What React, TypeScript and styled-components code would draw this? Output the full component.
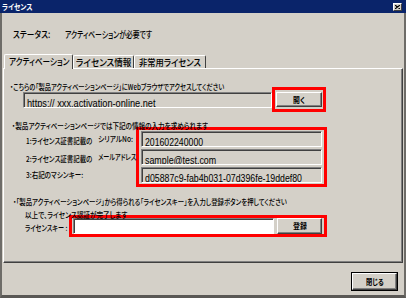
import React, { useLayoutEffect, useRef, useState } from 'react';
import styled, { createGlobalStyle } from 'styled-components';

const GlobalStyle = createGlobalStyle`
  html, body {
    margin: 0;
    padding: 0;
    background: #d4d0c8;
  }
  body {
    font-family: "Noto Sans CJK JP", sans-serif;
    font-feature-settings: "palt";
    font-weight: 500;
    color: #000;
  }
`

// the dialog uses a narrow UI font: each text keeps its height and is
// squeezed to the width it has in the screenshot
const FitSpan = styled.span<{ $size: number; $latin?: boolean }>`
  display: inline-block;
  white-space: nowrap;
  font-size: ${p => p.$size}px;
  ${p => (p.$latin ? 'font-family: "Liberation Sans", Arial, sans-serif; font-weight: 400;' : '')}
  transform-origin: 0 50%;
`

type FitProps = { w: number; size: number; latin?: boolean; children: React.ReactNode };

function Fit({ w, size, latin, children }: FitProps) {
  const ref = useRef<HTMLSpanElement>(null);
  const [k, setK] = useState(1);

  useLayoutEffect(() => {
    let alive = true;
    const measure = () => {
      const el = ref.current;
      if (!el || !alive) return;
      const natural = el.scrollWidth;
      if (natural > 0) setK(Math.min(1, w / natural));
    };
    measure();
    if (document.fonts) document.fonts.ready.then(measure);
    return () => {
      alive = false;
    };
  }, [w, size]);

  return (
    <FitSpan ref={ref} $size={size} $latin={latin} style={{ width: w, transform: `scaleX(${k})` }}>
      {children}
    </FitSpan>
  );
}

const Window = styled.div`
  width: 406px;
  height: 298px;
  display: flex;
  flex-direction: column;
  background: #d4d0c8;
  overflow: hidden;
`

const TitleBar = styled.div`
  height: 13px;
  flex: none;
  display: flex;
  align-items: center;
  justify-content: space-between;
  padding: 0 4px 0 2px;
  background: #0a246a;
  color: #fff;
  font-weight: bold;
  line-height: 13px;
`

const CloseBox = styled.div`
  width: 9px;
  height: 8px;
  box-sizing: border-box;
  background: #d4d0c8;
  border-top: 1px solid #fff;
  border-left: 1px solid #fff;
  border-right: 1px solid #404040;
  border-bottom: 1px solid #404040;
  display: flex;
  align-items: center;
  justify-content: center;
`

const Frame = styled.div`
  flex: 1;
  display: flex;
  flex-direction: column;
  padding: 0 1px;
  border-left: 2px solid #6e6c68;
  border-right: 2px solid #6e6c68;
  border-bottom: 3px solid #5a5855;
`

const StatusRow = styled.div`
  height: 14px;
  margin: 14px 0 13px 10px;
  display: flex;
  align-items: center;
  gap: 15px;
  line-height: 14px;
`

const TabStrip = styled.div`
  height: 14px;
  display: flex;
  align-items: flex-end;
  padding-left: 1px;
`

const Tab = styled.div<{ $active?: boolean; $w: number }>`
  width: ${p => p.$w}px;
  height: ${p => (p.$active ? 15 : 13)}px;
  box-sizing: border-box;
  margin-bottom: ${p => (p.$active ? -1 : 0)}px;
  position: relative;
  z-index: ${p => (p.$active ? 1 : 0)};
  background: #d4d0c8;
  border-top: 1px solid #fff;
  border-left: 1px solid #fff;
  border-right: 1px solid #404040;
  border-radius: 2px 2px 0 0;
  display: flex;
  align-items: center;
  justify-content: center;
  line-height: 12px;
  padding-bottom: ${p => (p.$active ? 2 : 0)}px;
`

const Panel = styled.div`
  height: 195px;
  box-sizing: border-box;
  border-top: 1px solid #fff;
  border-left: 1px solid #fff;
  border-right: 1px solid #404040;
  border-bottom: 1px solid #404040;
  box-shadow: inset -1px -1px #808080;
  display: flex;
  flex-direction: column;
`

const Note = styled.div<{ $indent: number; $top: number }>`
  height: 8px;
  line-height: 8px;
  margin-top: ${p => p.$top}px;
  padding-left: ${p => p.$indent}px;
  white-space: nowrap;
`

const RedBox = styled.div<{ $pad: string }>`
  border: 3px solid #ff0000;
  padding: ${p => p.$pad};
  display: flex;
  align-items: center;
  box-sizing: border-box;
`

const UrlRow = styled.div`
  display: flex;
  align-items: center;
  margin-left: 19px;
  height: 25px;
`

const Field = styled.div<{ $w: number; $white?: boolean }>`
  width: ${p => p.$w}px;
  height: 16px;
  flex: none;
  box-sizing: border-box;
  background: ${p => (p.$white ? '#fff' : '#d4d0c8')};
  border-top: 1px solid #808080;
  border-left: 1px solid #808080;
  border-right: 1px solid #fff;
  border-bottom: 1px solid #fff;
  box-shadow: inset 1px 1px #404040;
  padding-left: 3px;
  line-height: 15px;
  white-space: nowrap;
  overflow: hidden;
`

const Button = styled.div<{ $w: number; $h: number; $gap?: number; $default?: boolean }>`
  width: ${p => p.$w}px;
  height: ${p => p.$h}px;
  flex: none;
  margin-left: ${p => p.$gap ?? 0}px;
  box-sizing: border-box;
  background: #d4d0c8;
  border-top: 1px solid #fff;
  border-left: 1px solid #fff;
  border-right: 1px solid #404040;
  border-bottom: 1px solid #404040;
  box-shadow: inset -1px -1px #808080${p => (p.$default ? ', 0 0 0 1px #000' : '')};
  display: flex;
  align-items: center;
  justify-content: center;
  font-weight: bold;
  line-height: 10px;
`

const InfoRow = styled.div`
  display: flex;
  margin: 1px 0 0 22px;
`

const LabelColumn = styled.div`
  width: 110px;
  padding-top: 3px;
  display: flex;
  flex-direction: column;
`

const Label = styled.div`
  height: 18px;
  line-height: 18px;
  white-space: nowrap;
  display: flex;
  align-items: center;
`

const LabelHead = styled.span`
  width: 72px;
  flex: none;
`

const FieldStack = styled.div`
  display: flex;
  flex-direction: column;
  gap: 2px;
`

const KeyRow = styled.div`
  display: flex;
  align-items: center;
  margin-left: 21px;
`

const KeyLabel = styled.div`
  width: 44px;
  flex: none;
  line-height: 10px;
  white-space: nowrap;
`

const Footer = styled.div`
  flex: 1;
  display: flex;
  justify-content: flex-end;
  align-items: flex-start;
  padding: 10px 6px 0 0;
`

export default function App() {
  return (
    <>
      <GlobalStyle />
      <Window>
        <TitleBar>
          <Fit w={31} size={7.5}>ライセンス</Fit>
          <CloseBox>
            <svg width="5" height="4" viewBox="0 0 5 4">
              <path d="M0 0 L5 4 M5 0 L0 4" stroke="#000" strokeWidth="1.1" />
            </svg>
          </CloseBox>
        </TitleBar>
        <Frame>
          <StatusRow>
            <Fit w={37} size={9.5}>ステータス:</Fit>
            <Fit w={87} size={9.5}>アクティベーションが必要です</Fit>
          </StatusRow>
          <TabStrip>
            <Tab $active $w={69}><Fit w={60} size={9.5}>アクティベーション</Fit></Tab>
            <Tab $w={61}><Fit w={55} size={9.5}>ライセンス情報</Fit></Tab>
            <Tab $w={72}><Fit w={62} size={9.5}>非常用ライセンス</Fit></Tab>
          </TabStrip>
          <Panel>
            <Note $indent={6} $top={10}>
              <Fit w={214} size={7.5}>・こちらの「製品アクティベーションページ」にWebブラウザでアクセスしてください</Fit>
            </Note>
            <UrlRow>
              <Field $w={249}>
                <Fit w={129} size={10.5} latin>https:// xxx.activation-online.net</Fit>
              </Field>
              <RedBox $pad="2px 1px">
                <Button $w={46} $h={15}><Fit w={12} size={8}>開く</Fit></Button>
              </RedBox>
            </UrlRow>
            <Note $indent={8} $top={6}>
              <Fit w={196} size={7.5}>・製品アクティベーションページでは下記の情報の入力を求められます</Fit>
            </Note>
            <InfoRow>
              <LabelColumn>
                <Label>
                  <LabelHead><Fit w={66} size={8}>1:ライセンス証書記載の</Fit></LabelHead>
                  <Fit w={35} size={8}>シリアルNo:</Fit>
                </Label>
                <Label>
                  <LabelHead><Fit w={66} size={8}>2:ライセンス証書記載の</Fit></LabelHead>
                  <Fit w={38} size={8}>メールアドレス</Fit>
                </Label>
                <Label><Fit w={57} size={8}>3:右記のマシンキー:</Fit></Label>
              </LabelColumn>
              <RedBox $pad="1px 2px">
                <FieldStack>
                  <Field $w={181}><Fit w={58} size={10.5} latin>201602240000</Fit></Field>
                  <Field $w={181}><Fit w={71} size={10.5} latin>sample@test.com</Fit></Field>
                  <Field $w={181}>
                    <Fit w={157} size={10.5} latin>d05887c9-fab4b031-07d396fe-19ddef80</Fit>
                  </Field>
                </FieldStack>
              </RedBox>
            </InfoRow>
            <Note $indent={9} $top={7}>
              <Fit w={274} size={7.5}>・「製品アクティベーションページ」から得られる「ライセンスキー」を入力し登録ボタンを押してください</Fit>
            </Note>
            <Note $indent={21} $top={5}>
              <Fit w={102} size={7.5}>以上で、ライセンス認証が完了します</Fit>
            </Note>
            <KeyRow>
              <KeyLabel><Fit w={42} size={8}>ライセンスキー :</Fit></KeyLabel>
              <RedBox $pad="0 2px 0 1px">
                <Field $w={201} $white />
                <Button $w={45} $h={16} $gap={3}><Fit w={14} size={8}>登録</Fit></Button>
              </RedBox>
            </KeyRow>
          </Panel>
          <Footer>
            <Button $w={45} $h={17} $default><Fit w={18} size={8}>閉じる</Fit></Button>
          </Footer>
        </Frame>
      </Window>
    </>
  );
}
